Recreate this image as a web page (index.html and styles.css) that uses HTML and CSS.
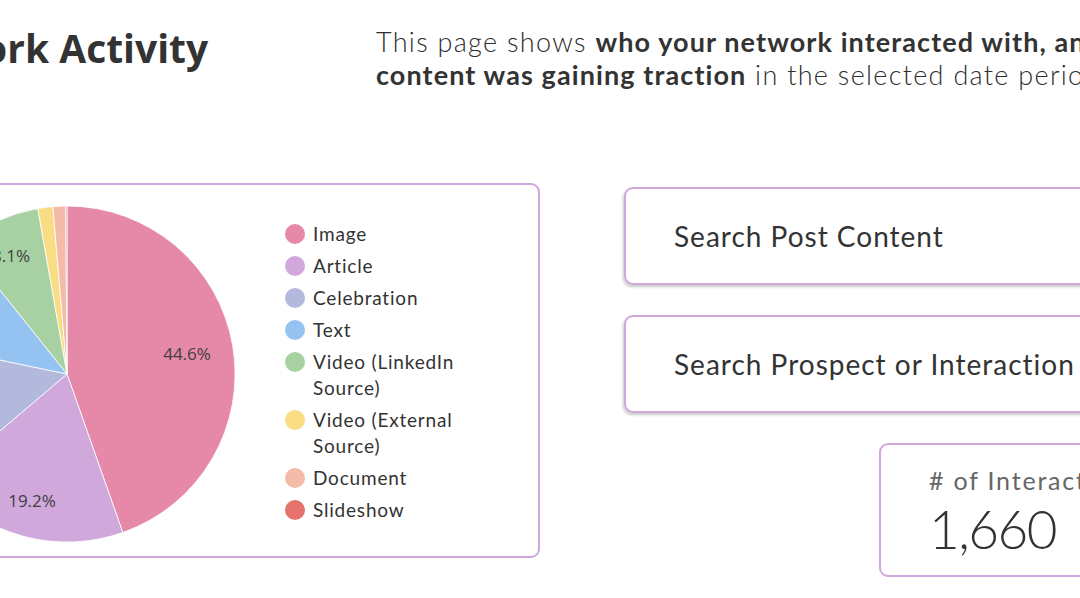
FILE: index.html
```html
<!DOCTYPE html>
<html lang="en">
<head>
<meta charset="utf-8">
<title>Network Activity</title>
<link rel="stylesheet" href="styles.css">
</head>
<body>
<div class="page">
  <header class="header">
    <h1 class="title">Network Activity</h1>
    <p class="intro">This page shows <b>who your network interacted with, and what</b><br><b>content was gaining traction</b> in the selected date period.</p>
  </header>
  <main class="main">
    <section class="chart-card">
      <svg class="pie" width="336" height="336" viewBox="0 0 336 336">
        <g stroke="#ffffff" stroke-width="0.8">
          <path fill="#e688a8" d="M168,168 L168,0 A168,168 0 0 1 223.8,326.5 Z"/>
          <path fill="#d0a8dc" d="M168,168 L223.8,326.5 A168,168 0 0 1 39.9,276.7 Z"/>
          <path fill="#b3b8dd" d="M168,168 L39.9,276.7 A168,168 0 0 1 3.5,133.6 Z"/>
          <path fill="#94c3f2" d="M168,168 L3.5,133.6 A168,168 0 0 1 63.2,36.7 Z"/>
          <path fill="#a8d1a3" d="M168,168 L63.2,36.7 A168,168 0 0 1 138.8,2.6 Z"/>
          <path fill="#f8dd85" d="M168,168 L138.8,2.6 A168,168 0 0 1 153.9,0.6 Z"/>
          <path fill="#f5bba9" d="M168,168 L153.9,0.6 A168,168 0 0 1 166.8,0 Z"/>
          <path fill="#e6736b" d="M168,168 L166.8,0 A168,168 0 0 1 168,0 Z"/>
        </g>
        <g class="pie-labels">
          <text x="288" y="154" text-anchor="middle">44.6%</text>
          <text x="133" y="301" text-anchor="middle">19.2%</text>
          <text x="131" y="56" text-anchor="end">8.1%</text>
        </g>
      </svg>
      <ul class="legend">
        <li><span class="dot dot-image"></span><span class="label">Image</span></li>
        <li><span class="dot dot-article"></span><span class="label">Article</span></li>
        <li><span class="dot dot-celebration"></span><span class="label">Celebration</span></li>
        <li><span class="dot dot-text"></span><span class="label">Text</span></li>
        <li><span class="dot dot-video-li"></span><span class="label">Video (LinkedIn Source)</span></li>
        <li><span class="dot dot-video-ext"></span><span class="label">Video (External Source)</span></li>
        <li><span class="dot dot-document"></span><span class="label">Document</span></li>
        <li><span class="dot dot-slideshow"></span><span class="label">Slideshow</span></li>
      </ul>
    </section>
    <section class="side">
      <div class="search">Search Post Content</div>
      <div class="search">Search Prospect or Interaction</div>
      <div class="kpi">
        <div class="kpi-label"># of Interactions</div>
        <div class="kpi-value">1,660</div>
      </div>
    </section>
  </main>
</div>
</body>
</html>
```
FILE: styles.css
```css
html, body {
  margin: 0;
  padding: 0;
  background: #ffffff;
}

body {
  width: 1080px;
  height: 598px;
  overflow: hidden;
  font-family: "Lato", "Open Sans", sans-serif;
  color: #333333;
}

.page {
  width: 1080px;
  height: 598px;
  overflow: hidden;
}

.header {
  display: flex;
  height: 183px;
}

.title {
  flex: 0 0 498px;
  margin: 0 0 0 -122px;
  padding-top: 28px;
  font-family: "Open Sans", sans-serif;
  font-weight: 700;
  font-size: 39px;
  line-height: 40px;
  color: #333333;
  white-space: nowrap;
}

.intro {
  margin: 0;
  padding-top: 25px;
  font-size: 27px;
  font-weight: 300;
  line-height: 33px;
  letter-spacing: 1.3px;
  white-space: nowrap;
  color: #2e2e2e;
}

.intro b {
  font-weight: 700;
  letter-spacing: 1.1px;
  color: #333333;
}

.main {
  display: flex;
  align-items: flex-start;
}

.chart-card {
  flex: 0 0 auto;
  box-sizing: border-box;
  width: 740px;
  height: 375px;
  margin-left: -200px;
  border: 2px solid #cfa8db;
  border-radius: 9px;
  padding: 21px 0 0 97px;
  display: flex;
  align-items: flex-start;
  gap: 50px;
}

.pie {
  flex: 0 0 auto;
  display: block;
}

.pie-labels text {
  font-family: "Open Sans", sans-serif;
  font-size: 17px;
  fill: #404040;
}

.legend {
  list-style: none;
  margin: 15px 0 0 0;
  padding: 0;
  display: flex;
  flex-direction: column;
  gap: 6px;
  width: 180px;
}

.legend li {
  display: flex;
  align-items: flex-start;
  gap: 8px;
  font-size: 19px;
  line-height: 26px;
  letter-spacing: 0.8px;
  color: #333333;
}

.label {
  width: 160px;
}

.dot {
  flex: 0 0 20px;
  width: 20px;
  height: 20px;
  border-radius: 50%;
  margin-top: 3px;
}

.dot-image { background: #e688a8; }
.dot-article { background: #d0a8dc; }
.dot-celebration { background: #b3b8dd; }
.dot-text { background: #94c3f2; }
.dot-video-li { background: #a8d1a3; }
.dot-video-ext { background: #f8dd85; }
.dot-document { background: #f5bba9; }
.dot-slideshow { background: #e6736b; }

.side {
  flex: 0 0 auto;
  margin-left: 84px;
  padding-top: 4px;
  display: flex;
  flex-direction: column;
  gap: 30px;
}

.search {
  box-sizing: border-box;
  width: 620px;
  height: 98px;
  border: 2px solid #cfa8db;
  border-radius: 9px;
  box-shadow: -1px 2px 3px rgba(0, 0, 0, 0.22);
  display: flex;
  align-items: center;
  padding-left: 48px;
  font-size: 28px;
  letter-spacing: 1px;
  color: #333333;
  white-space: nowrap;
}

.kpi {
  box-sizing: border-box;
  width: 400px;
  height: 134px;
  margin-left: 255px;
  border: 2px solid #cfa8db;
  border-radius: 9px;
  padding: 19px 0 0 48px;
}

.kpi-label {
  font-size: 25px;
  line-height: 32px;
  letter-spacing: 1.8px;
  color: #666666;
  white-space: nowrap;
}

.kpi-value {
  font-size: 53px;
  font-weight: 300;
  line-height: 66px;
  letter-spacing: -1.5px;
  color: #333333;
}
```
